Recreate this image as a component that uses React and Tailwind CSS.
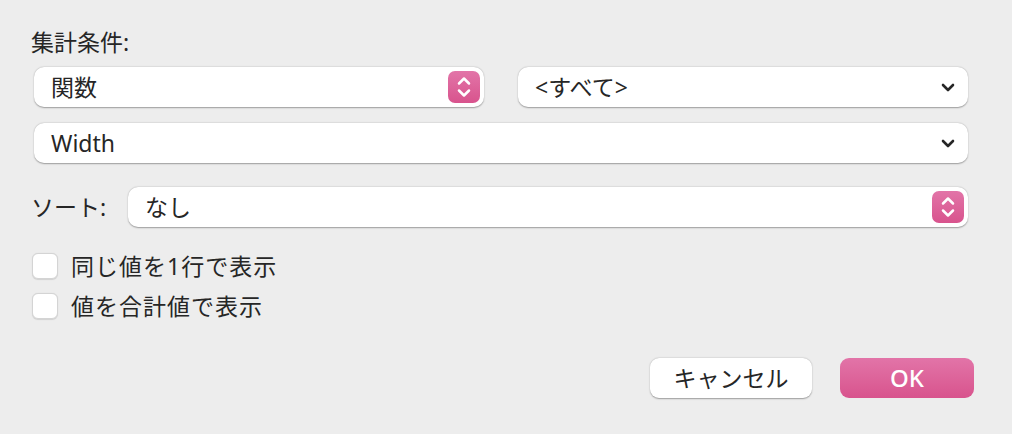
import React from "react";

const FONT = { fontFamily: '"Noto Sans", "Noto Sans CJK JP", sans-serif' };

function Stepper() {
  return (
    <div className="w-[32px] h-[32px] rounded-[7px] bg-gradient-to-b from-[#e274a8] to-[#d8538d] flex items-center justify-center">
      <svg width="16" height="24" viewBox="0 0 16 24" fill="none" stroke="white" strokeWidth="2.5" strokeLinecap="round" strokeLinejoin="round">
        <path d="M3 8.5 L8 3.5 L13 8.5" />
        <path d="M3 15.5 L8 20.5 L13 15.5" />
      </svg>
    </div>
  );
}

function Chevron() {
  return (
    <svg width="14" height="9" viewBox="0 0 14 9" fill="none" stroke="#262626" strokeWidth="2.6" strokeLinecap="round" strokeLinejoin="round">
      <path d="M2 2 L7 7 L12 2" />
    </svg>
  );
}

function Popup({ text, kind, className = "" }) {
  return (
    <div className={"h-[40px] bg-white rounded-[10px] shadow-[0_0.5px_1.5px_rgba(0,0,0,0.35)] flex items-center justify-between " + className}>
      <span className="pl-[17px] text-[23px] leading-[40px] text-[#262626]">{text}</span>
      {kind === "stepper" ? (
        <div className="pr-[4px]"><Stepper /></div>
      ) : (
        <div className="pr-[13px] flex items-center"><Chevron /></div>
      )}
    </div>
  );
}

function Check({ label }) {
  return (
    <div className="flex items-center h-[26px]">
      <div className="w-[26px] h-[26px] rounded-[6px] bg-white border border-[#d4d4d4] shadow-[0_0.5px_1px_rgba(0,0,0,0.12)]" />
      <span className="ml-[13px] text-[23px] leading-[26px] tracking-[1px] text-[#262626]">{label}</span>
    </div>
  );
}

export default function App() {
  return (
    <div className="w-[1012px] h-[434px] bg-[#ededed] overflow-hidden" style={FONT}>
      <div className="pt-[28px] pl-[34px] pr-[44px]">
        <div className="h-[28px] leading-[28px] text-[23px] text-[#262626] -ml-[3px]">集計条件:</div>
        <div className="mt-[11px] grid grid-cols-2 gap-[34px]">
          <Popup text="関数" kind="stepper" />
          <Popup text="<すべて>" kind="chevron" />
        </div>
        <Popup text="Width" kind="chevron" className="mt-[16px]" />
        <div className="mt-[24px] flex items-center">
          <span className="w-[97px] shrink-0 -ml-[3px] text-[23px] text-[#262626]">ソート:</span>
          <Popup text="なし" kind="stepper" className="flex-1" />
        </div>
        <div className="mt-[26px] flex flex-col gap-[14px] -ml-[2px]">
          <Check label="同じ値を1行で表示" />
          <Check label="値を合計値で表示" />
        </div>
        <div className="mt-[39px] flex justify-end gap-[28px] -mr-[6px]">
          <button className="w-[162px] h-[40px] bg-white rounded-[9px] shadow-[0_0.5px_1.5px_rgba(0,0,0,0.35)] text-[23px] text-[#262626]">キャンセル</button>
          <button className="w-[134px] h-[40px] rounded-[9px] bg-gradient-to-b from-[#e274a8] to-[#d8538d] text-[24px] font-medium text-white">OK</button>
        </div>
      </div>
    </div>
  );
}
